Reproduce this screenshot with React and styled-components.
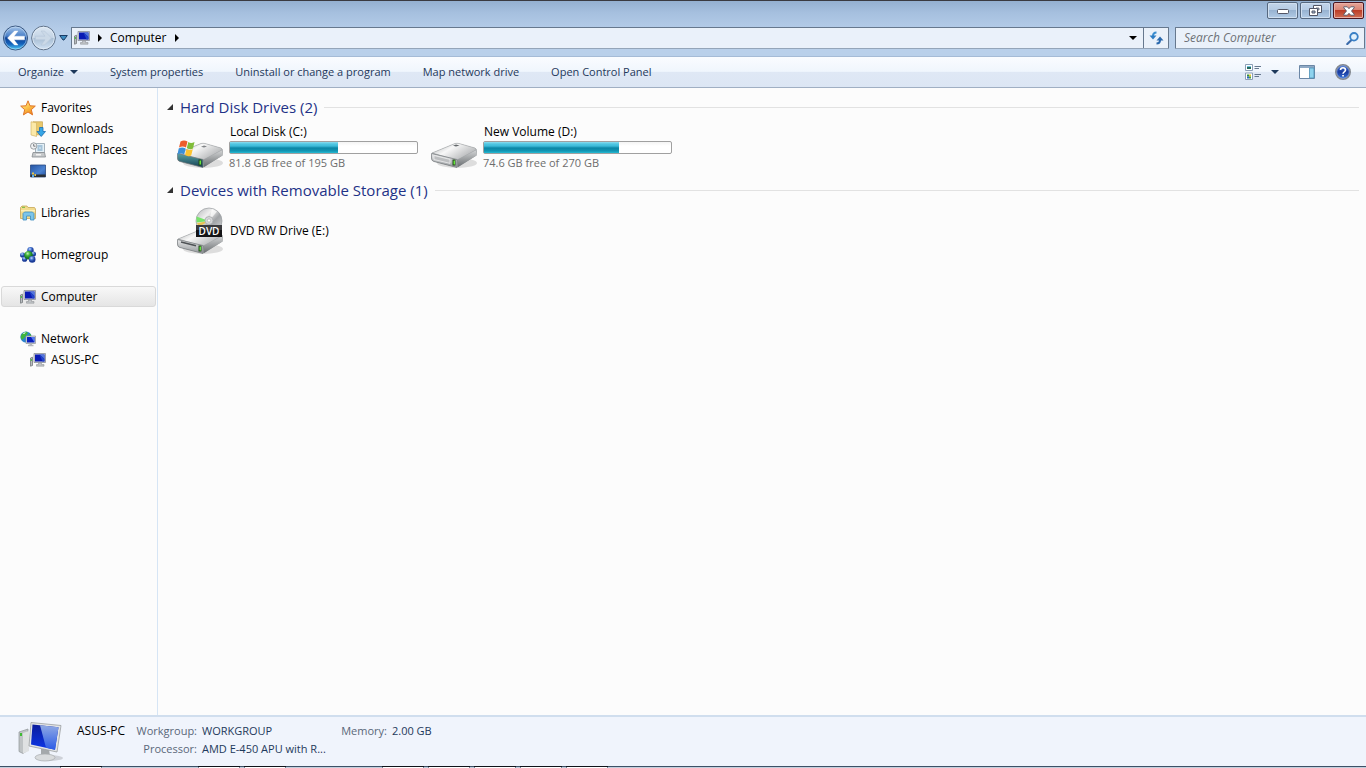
import { useState } from 'react';
import styled, { createGlobalStyle } from 'styled-components';

const GlobalStyle = createGlobalStyle`
  * {
    box-sizing: border-box;
  }

  body {
    margin: 0;
    background: #fcfcfc;
    color: #000;
    font-family: 'Open Sans', 'Noto Sans', sans-serif;
    font-size: 12px;
    line-height: 18px;
  }

  button,
  input {
    font: inherit;
    color: inherit;
  }

  button {
    background: none;
    border: 0;
    cursor: default;
    padding: 0;
  }

  svg {
    display: block;
    flex: none;
  }
`;

const Window = styled.div`
  display: flex;
  flex-direction: column;
  min-height: 100vh;
`;

const Frame = styled.header`
  background: linear-gradient(#94b0d0, #a6c0df 12px, #b9d0eb 34px, #b9d0ea);
  border-bottom: 1px solid #a5bbd6;
  border-top: 1px solid #3a3a40;
  padding: 1px 1px 6px 3px;
`;

const Caption = styled.div`
  display: flex;
  gap: 2px;
  height: 24px;
  justify-content: flex-end;
  padding-right: 1px;
`;

const CaptionButton = styled.button`
  align-items: center;
  background: ${({ $close }) =>
    $close
      ? 'linear-gradient(#e5a598, #d98373 48%, #bd3d27 50%, #cf6f55)'
      : 'linear-gradient(#c3d5ea, #b4cae3 48%, #98b3d1 50%, #b2cbe6)'};
  border: 1px solid ${({ $close }) => ($close ? '#4b1620' : '#56687f')};
  border-radius: 2px;
  box-shadow: inset 0 0 0 1px ${({ $close }) => ($close ? '#e9b0a6' : '#d0dff0')};
  display: flex;
  height: 17px;
  justify-content: center;
  width: 31px;
`;

const NavRow = styled.div`
  align-items: center;
  display: flex;
  height: 24px;
`;

const NavButtons = styled.div`
  align-items: center;
  display: flex;
  gap: 3px;
  margin-right: 3px;
`;

const AddressBar = styled.div`
  align-items: center;
  background: #eaf1fa;
  border: 1px solid #66788e;
  border-bottom-color: #94a5b9;
  border-radius: 1px;
  display: flex;
  flex: 1;
  height: 22px;
  margin-right: 6px;
  padding-left: 2px;
`;

const Crumb = styled.button`
  align-items: center;
  display: flex;
  gap: 8px;
`;

const AddressDrop = styled.button`
  display: flex;
  justify-content: center;
  margin-left: auto;
  width: 20px;
`;

const Refresh = styled.button`
  align-items: center;
  border-left: 1px solid #66788e;
  display: flex;
  height: 20px;
  justify-content: center;
  width: 25px;
`;

const SearchBox = styled.form`
  align-items: center;
  background: #eaf1fa;
  border: 1px solid #66788e;
  border-bottom-color: #94a5b9;
  border-radius: 1px;
  display: flex;
  height: 22px;
  padding: 0 5px 0 8px;
  width: 190px;
`;

const SearchInput = styled.input`
  background: none;
  border: 0;
  flex: 1;
  min-width: 0;
  outline: 0;
  padding: 0;

  &::placeholder {
    color: #6e7177;
    font-style: italic;
    opacity: 1;
  }
`;

const Toolbar = styled.nav`
  align-items: center;
  background: linear-gradient(#fafcff, #f0f6fd 48%, #dfe8f5 50%, #dce6f4);
  border-bottom: 1px solid #a0afc3;
  color: #1e395b;
  display: flex;
  font-size: 11px;
  gap: 32px;
  height: 31px;
  padding: 0 15px 0 18px;
`;

const ToolButton = styled.button`
  align-items: center;
  display: flex;
  gap: 6px;
`;

const ToolIcons = styled.div`
  align-items: center;
  display: flex;
  gap: 20px;
  margin-left: auto;
`;

const ViewButton = styled(ToolButton)`
  gap: 10px;
`;

const Body = styled.div`
  display: flex;
  flex: 1;
`;

const Sidebar = styled.aside`
  border-right: 1px solid #d6e5f5;
  flex: none;
  padding: 9px 1px;
  width: 158px;
`;

const TreeGroup = styled.ul`
  list-style: none;
  margin: 0 0 21px;
  padding: 0;
`;

const TreeLink = styled.a`
  align-items: center;
  background: ${({ $selected }) => ($selected ? 'linear-gradient(#f8f8f8, #e5e5e5)' : 'none')};
  border: 1px solid ${({ $selected }) => ($selected ? '#d9d9d9' : 'transparent')};
  border-radius: 3px;
  color: #000;
  display: flex;
  gap: 5px;
  height: 21px;
  padding-left: ${({ $child }) => ($child ? '28px' : '18px')};
  text-decoration: none;
`;

const Content = styled.main`
  flex: 1;
  min-width: 0;
  padding: 7px 7px 0 9px;
`;

const GroupHeading = styled.h2`
  align-items: center;
  color: #1f3287;
  display: flex;
  font-size: 15px;
  font-weight: 400;
  gap: 7px;
  line-height: 24px;
  margin: 0;

  &:after {
    background: #e2e2e2;
    content: '';
    flex: 1;
    height: 1px;
  }
`;

const DriveList = styled.ul`
  display: flex;
  flex-wrap: wrap;
  gap: 6px;
  list-style: none;
  margin: 5px 0 6px;
  padding: 0 0 0 9px;
`;

const Drive = styled.li`
  align-items: center;
  display: flex;
  gap: 5px;
  height: 48px;
  width: 248px;
`;

const DriveInfo = styled.div`
  flex: 1;
  line-height: 16px;

  & p {
    margin: 0;
  }
`;

const DriveName = styled.p`
  padding-left: 1px;
`;

const DriveFree = styled.p`
  color: #6d6d6d;
  font-size: 11px;
  padding-bottom: 2px;
`;

const Gauge = styled.div`
  background: linear-gradient(#f4f4f4, #fff 4px);
  border: 1px solid #a0a0a0;
  border-radius: 2px;
  height: 13px;
  margin: 1px 6px 1px 0;
`;

const GaugeFill = styled.div`
  background: linear-gradient(#8ddcef, #4fc6e2 2px, #3dbbd9 4px, #0a86a5 6px, #1296b4 9px, #26bcd5);
  height: 100%;
`;

const Details = styled.footer`
  align-items: center;
  background: #f0f4fc;
  border-top: 2px solid #d0deee;
  color: #1e395b;
  display: flex;
  height: 51px;
  padding-left: 18px;
`;

const DetailsGrid = styled.dl`
  display: grid;
  font-size: 11px;
  gap: 0 5px;
  grid-template-columns: 50px 65px 132px 48px auto;
  margin: 0 0 4px 14px;

  & dt {
    color: #5a6779;
    text-align: right;
  }

  & dd {
    margin: 0;
    white-space: nowrap;
  }
`;

const MachineName = styled.dt`
  && {
    color: #000;
    font-size: 12px;
    text-align: left;
  }
`;

const ProcessorLabel = styled.dt`
  grid-column: 2;
`;

const Taskbar = styled.div`
  background: #c3cfdd;
  border-top: 1px solid #3d5066;
  display: flex;
  gap: 96px;
  height: 2px;
  padding-left: 60px;
`;

const TaskGroup = styled.div`
  display: flex;
  gap: 4px;
`;

const TaskTab = styled.span`
  background: #fff;
  border: solid #75859a;
  border-width: 0 1px;
  box-shadow: 0 -1px #10131a;
  width: 42px;
`;

const Arrow = ({ dir = 'down', color = '#1e395b' }) => (
  <svg width={dir === 'down' ? 8 : 4} height={dir === 'down' ? 4 : 8} fill={color}>
    <path d={dir === 'down' ? 'M0 0h8L4 4z' : 'M0 0l4 4-4 4z'} />
  </svg>
);

const BackIcon = () => (
  <svg width="25" height="26" viewBox="0 0 25 26">
    <defs>
      <linearGradient id="back" x2="0" y2="1">
        <stop offset="0" stopColor="#a9c7ea" />
        <stop offset=".42" stopColor="#4a80c8" />
        <stop offset=".5" stopColor="#0d4296" />
        <stop offset=".75" stopColor="#1563bc" />
        <stop offset="1" stopColor="#4fd2fb" />
      </linearGradient>
    </defs>
    <circle cx="12.5" cy="13" r="12" fill="url(#back)" stroke="#3a5780" />
    <circle cx="12.5" cy="13" r="11" fill="none" stroke="#cfe5fa" strokeOpacity=".5" />
    <path d="M4.500 13l7-7H15l-4 5.200h10.500v3.600H11l4 5.200h-3.500z" fill="#fff" stroke="#fff" strokeWidth=".4" />
  </svg>
);

const ForwardIcon = () => (
  <svg width="25" height="26" viewBox="0 0 25 26">
    <defs>
      <linearGradient id="fwd" x2="0" y2="1">
        <stop offset="0" stopColor="#dde8f3" />
        <stop offset=".48" stopColor="#c4d4e5" />
        <stop offset=".52" stopColor="#a9bfd5" />
        <stop offset="1" stopColor="#d2e3f4" />
      </linearGradient>
    </defs>
    <circle cx="12.5" cy="13" r="11.8" fill="url(#fwd)" stroke="#5c6e85" />
    <circle cx="12.5" cy="13" r="10.8" fill="none" stroke="#e8f1fa" strokeOpacity=".7" />
    <path d="M20.500 13l-7-7H10l4 5.200H4.500v3.600H14L10 20h3.500z" fill="#cbd9e7" stroke="#b5c6d8" strokeWidth=".6" />
  </svg>
);

const PcIcon = () => (
  <svg width="16" height="16" viewBox="0 0 16 16">
    <path d="M.5 6l2-.8v8.300l-2 .7z" fill="#b9bdc0" stroke="#73787c" strokeWidth=".8" />
    <path d="M.8 7h1v2h-1z" fill="#36bd2e" />
    <path d="M4 1.500h11.500v9H4z" fill="#d2d4da" stroke="#8d9199" strokeWidth=".8" />
    <path d="M5 2.500h9.500v7H5z" fill="#0a1ab4" />
    <path d="M9.500 2.500h5v4.500z" fill="#5477dc" />
    <path d="M9.500 2.500l5 4.500v2.500h-2z" fill="#2446c8" />
    <path d="M8.500 10.800h3v1.700h2.500v1.700H6.500v-1.700h2z" fill="#c1c4c8" stroke="#84888c" strokeWidth=".5" />
  </svg>
);

const StarIcon = () => (
  <svg width="16" height="16" viewBox="0 0 16 16">
    <defs>
      <linearGradient id="star" x2=".6" y2="1">
        <stop offset="0" stopColor="#fff3a0" />
        <stop offset=".5" stopColor="#fdc850" />
        <stop offset="1" stopColor="#f08a1c" />
      </linearGradient>
    </defs>
    <path d="M8 .8l2 5 5.300.3-4 3.600 1.300 5.200L8 12l-4.600 2.900 1.300-5.200-4-3.600L6 5.800z" fill="url(#star)" stroke="#e0762a" strokeLinejoin="round" />
  </svg>
);

const DownloadsIcon = () => (
  <svg width="16" height="16" viewBox="0 0 16 16">
    <path d="M3 .8h9.500v13H3z" fill="#e9c96c" stroke="#c9a95a" strokeWidth=".8" />
    <path d="M1 .8l5.500 1V15.500L1 14z" fill="#fbe9a8" stroke="#cfae5c" strokeWidth=".6" />
    <path d="M9.500 6.500h3.500v4h2.500l-4.300 5-4.200-5h2.500z" fill="#37a6e6" stroke="#1b6fb5" strokeWidth=".8" />
  </svg>
);

const RecentIcon = () => (
  <svg width="16" height="16" viewBox="0 0 16 16">
    <path d="M5.500 1.500h9v9h-9z" fill="#e4f0f7" stroke="#8fa0ab" strokeWidth=".8" />
    <path d="M7.500 4h5M7.500 6h2m1 0h2M7.500 8h5" stroke="#6697bb" />
    <path d="M3 10.500h11.500l1 4.500H2z" fill="#c5c8ca" stroke="#868b8f" strokeWidth=".8" />
    <path d="M6 12h5v1.500H6z" fill="#f3f3f3" />
    <circle cx="3.7" cy="4" r="3.2" fill="#f0f1f2" stroke="#92979b" strokeWidth=".9" />
    <path d="M3.700 2v2.200h1.800" stroke="#555b60" strokeWidth=".8" fill="none" />
  </svg>
);

const DesktopIcon = () => (
  <svg width="16" height="16" viewBox="0 0 16 16">
    <defs>
      <linearGradient id="desk" x2="1" y2="1">
        <stop offset="0" stopColor="#2554a3" />
        <stop offset=".6" stopColor="#4b83d2" />
        <stop offset="1" stopColor="#234f9a" />
      </linearGradient>
    </defs>
    <path d="M.5 2h15v12H.5z" fill="url(#desk)" stroke="#294a82" strokeWidth=".8" />
    <path d="M.5 11.500h15V14H.5z" fill="#2b3036" />
    <path d="M2 9.500h2v2H2zM4.500 11h1.500v2H4.500z" fill="#e5c44c" />
    <path d="M2 12h2v2H2z" fill="#5bb0ee" />
  </svg>
);

const LibrariesIcon = () => (
  <svg width="16" height="16" viewBox="0 0 16 16">
    <path d="M.5 2.500L2 1h5l1 1.500h6.500l1 1.500v9.500H.5z" fill="#f2db8c" stroke="#c6a757" strokeWidth=".8" />
    <path d="M1 5h14v1.500H1z" fill="#fdf0b8" />
    <path d="M2 1.800h3v1H2z" fill="#6cb93f" />
    <path d="M3 15V8.500L4.500 7h8L14 8.500V15h-3.500v-4h-4v4z" fill="#7cc5ea" stroke="#3d8dbf" strokeWidth=".8" />
  </svg>
);

const HomegroupIcon = () => (
  <svg width="16" height="16" viewBox="0 0 16 16">
    <defs>
      <radialGradient id="ball" cx=".4" cy=".3">
        <stop offset="0" stopColor="#c9defb" />
        <stop offset=".5" stopColor="#4a78d2" />
        <stop offset="1" stopColor="#1b3c98" />
      </radialGradient>
      <radialGradient id="ballGreen" cx=".4" cy=".3">
        <stop offset="0" stopColor="#c4f2b4" />
        <stop offset=".5" stopColor="#41b23c" />
        <stop offset="1" stopColor="#1a7a24" />
      </radialGradient>
    </defs>
    <circle cx="10.5" cy="3.3" r="3.2" fill="url(#ball)" />
    <circle cx="2.6" cy="8" r="2.6" fill="url(#ball)" />
    <circle cx="13.4" cy="7" r="2.6" fill="url(#ball)" />
    <circle cx="4.6" cy="12.2" r="2.6" fill="url(#ball)" />
    <circle cx="8.5" cy="8.3" r="4.3" fill="url(#ballGreen)" />
    <circle cx="12.2" cy="12.4" r="3.3" fill="url(#ball)" />
  </svg>
);

const NetworkIcon = () => (
  <svg width="16" height="16" viewBox="0 0 16 16">
    <circle cx="6" cy="6" r="5.6" fill="#2c83cd" />
    <path d="M2 3q4-4 6-1L6 5 4 7 2 9Q-.5 6 2 3zM8 4l3-1v4z" fill="#3fb53c" />
    <path d="M2.500 3Q4 1 6 1L4.500 3z" fill="#cdf0d0" />
    <path d="M6 5h9.500v7.500H6z" fill="#d6d9dd" stroke="#8d9298" strokeWidth=".7" />
    <path d="M7 6h7.500v5.500H7z" fill="#0a1fbe" />
    <path d="M11 6h3.500v5.500z" fill="#527aee" />
    <path d="M9.500 12.500h2.500v1.300h1.500v1.400H8v-1.400h1.500z" fill="#b4b8bc" />
  </svg>
);

const RefreshIcon = () => (
  <svg width="15" height="14" viewBox="0 0 15 14">
    <path d="M7.500 1.500Q4 1.500 4 5" fill="none" stroke="#3b8ed0" strokeWidth="2" />
    <path d="M.5 4.500h7L4 8.500z" fill="#2d7cc4" />
    <path d="M7.500 12.500q3.500 0 3.500-3.500" fill="none" stroke="#2b69ad" strokeWidth="2" />
    <path d="M7.500 9.500h7L11 5.500z" fill="#2b69ad" />
  </svg>
);

const SearchIcon = () => (
  <svg width="13" height="13" viewBox="0 0 13 13">
    <path d="M6 7.500L1.300 12" stroke="#3b6cab" strokeWidth="2.200" strokeLinecap="round" />
    <circle cx="8" cy="4.800" r="3.800" fill="#e2f1fc" stroke="#3a80c6" strokeWidth="1.800" />
  </svg>
);

const ViewIcon = () => (
  <svg width="16" height="16" viewBox="0 0 16 16">
    <path d="M.5.500h7v6h-7zM.5 9h7v6.500h-7z" fill="#fff" stroke="#8b9fb6" />
    <path d="M2 2h4v1H2z" fill="#6fc2e0" />
    <path d="M2 3h4v2H2z" fill="#266a5b" />
    <path d="M2 10.500h2v2H2z" fill="#2e8f3e" />
    <path d="M4 10.500h2v2H4z" fill="#e1c32a" />
    <path d="M2 12.500h2v2H2z" fill="#3264c0" />
    <path d="M4 12.500h2v2H4z" fill="#4aa143" />
    <path d="M9.500 2.500H16M9.500 4.500H14M9.500 10.500H16M9.500 12.500H14" stroke="#66788e" />
  </svg>
);

const PaneIcon = () => (
  <svg width="16" height="14" viewBox="0 0 16 14">
    <path d="M.5.500h15v13H.5z" fill="#fff" stroke="#6b87a6" />
    <path d="M1 1h14v2H1z" fill="#8fa9c5" />
    <path d="M10.500 3h4.500v10h-4.500z" fill="#8ed3ee" stroke="#4c8fb5" strokeWidth=".8" />
  </svg>
);

const HelpIcon = () => (
  <svg width="16" height="16" viewBox="0 0 16 16">
    <defs>
      <linearGradient id="help" x2="0" y2="1">
        <stop offset="0" stopColor="#4a78d4" />
        <stop offset=".5" stopColor="#173a9f" />
        <stop offset="1" stopColor="#3a78dc" />
      </linearGradient>
    </defs>
    <circle cx="8" cy="8" r="7.2" fill="url(#help)" stroke="#83888f" strokeWidth="1.6" />
    <circle cx="8" cy="8" r="6.2" fill="none" stroke="#a9c1ec" strokeWidth=".5" />
    <path d="M5.500 6Q5.500 3.700 8 3.700T10.500 6Q10.500 7 9.300 7.800T8 9.700" fill="none" stroke="#fff" strokeWidth="1.600" />
    <path d="M7.200 11h1.700v1.600H7.200z" fill="#fff" />
  </svg>
);

const DriveBody = ({ teal }) => (
  <>
    <ellipse cx="27" cy="39" rx="20" ry="5" fill="#000" opacity=".12" />
    <path d="M2 29L25 19.500Q27 19 29 19.500L45 24Q47 25 47 27L46.500 31.500 29 42.500Q27 43.500 25 43L4 37.500Q2 37 1.500 35z" fill="#93979a" />
    <path d="M2 29L25 19.500Q27 19 29 19.500L45 24Q47 25 45 26.500L29 35Q27 36 25 35.500z" fill="url(#driveTop)" stroke="#a6a9ab" strokeWidth=".6" />
    <path d="M1.500 29.500L27 35.500V43.500L4 37.500Q1.500 37 1.500 34z" fill={teal ? 'url(#driveTeal)' : 'url(#driveFront)'} stroke="#777b7e" strokeWidth=".7" />
    <path d="M28 35.500L46.500 26V31.500L28 43z" fill="url(#driveSide)" />
    <path d="M22.500 35.500h3v6h-3z" fill="#22451d" />
    <path d="M23.500 36.500h1.500v4h-1.500z" fill="#66e63c" />
  </>
);

const DriveDefs = () => (
  <defs>
    <linearGradient id="driveTop" x2="1" y2=".6">
      <stop offset="0" stopColor="#a9acae" />
      <stop offset=".45" stopColor="#f8f8f8" />
      <stop offset="1" stopColor="#b0b2b4" />
    </linearGradient>
    <linearGradient id="driveFront" x2="0" y2="1">
      <stop offset="0" stopColor="#e8e9ea" />
      <stop offset="1" stopColor="#94989b" />
    </linearGradient>
    <linearGradient id="driveTeal" x2="0" y2="1">
      <stop offset="0" stopColor="#5aa4a5" />
      <stop offset="1" stopColor="#143f52" />
    </linearGradient>
    <linearGradient id="driveSide" x2="0" y2="1">
      <stop offset="0" stopColor="#d3d5d6" />
      <stop offset="1" stopColor="#6a6e71" />
    </linearGradient>
  </defs>
);

const SystemDriveIcon = () => (
  <svg width="48" height="48" viewBox="0 0 48 48">
    <DriveDefs />
    <DriveBody teal />
    <path d="M28 21.500l3 .9-3 1.200-3-.9z" fill="#808386" />
    <path d="M4.500 17.500Q8 15.500 11.500 17.500L10 23.500Q6.500 21.500 3 23.500z" fill="#ed5c2b" />
    <path d="M12.300 18Q15 20 18.500 18L17 24.500Q13.500 26 10.800 24z" fill="#81bd3a" />
    <path d="M2.700 24.500Q6 22.500 9.700 24.500L8.200 30.500Q5 28.500 1.500 30.500z" fill="#3a8fd8" />
    <path d="M10.500 25Q13.500 27 16.800 25.300L15.200 31.500Q12 33 9 31z" fill="#fbc432" />
  </svg>
);

const HardDriveIcon = () => (
  <svg width="48" height="48" viewBox="0 0 48 48">
    <DriveBody />
    <path d="M26 20.500l3.500.9-3.500 1.200-3-.9z" fill="#64686b" />
    <path d="M4 31.500l16 3.900v4L4 35.500z" fill="#bcbec0" stroke="#f4f4f4" strokeWidth=".7" />
  </svg>
);

const DvdText = styled.text`
  fill: #fff;
  font-family: 'Open Sans', sans-serif;
  font-size: 10px;
  font-weight: 600;
`;

const DvdIcon = () => (
  <svg width="48" height="48" viewBox="0 0 48 48">
    <defs>
      <linearGradient id="disc" x2="1" y2="1">
        <stop offset="0" stopColor="#b0b3b6" />
        <stop offset=".35" stopColor="#efefef" />
        <stop offset=".6" stopColor="#a0a3a6" />
        <stop offset="1" stopColor="#dedfe0" />
      </linearGradient>
    </defs>
    <g transform="translate(0 3)">
      <DriveBody />
      <path d="M5 32l15 3.700" stroke="#4d5154" strokeWidth="1.500" />
    </g>
    <circle cx="33" cy="14" r="13" fill="url(#disc)" stroke="#9a9da0" strokeWidth=".7" />
    <path d="M33 14L20.500 9.500v6z" fill="#78e36b" />
    <path d="M33 14L21 16l1.500 4z" fill="#e8c255" />
    <path d="M33 14l3-12 5 2.500z" fill="#fff" opacity=".7" />
    <circle cx="33" cy="13.5" r="4" fill="#d5d7d9" stroke="#a2a5a8" strokeWidth=".7" />
    <circle cx="33" cy="13.5" r="1.6" fill="#fff" stroke="#999" strokeWidth=".5" />
    <path d="M20 18h26v12H20z" fill="#141416" />
    <path d="M20 18h26v5H20z" fill="#3a3b3e" />
    <DvdText x="33" y="27.500" textAnchor="middle">DVD</DvdText>
  </svg>
);

const BigPcIcon = () => (
  <svg width="45" height="42" viewBox="0 0 45 42">
    <defs>
      <linearGradient id="screen" x2="0" y2="1">
        <stop offset="0" stopColor="#0a1c9c" />
        <stop offset="1" stopColor="#0c36e8" />
      </linearGradient>
      <linearGradient id="glare" x2="0" y2="1">
        <stop offset="0" stopColor="#8fa9e4" />
        <stop offset="1" stopColor="#2b5be6" />
      </linearGradient>
    </defs>
    <ellipse cx="31" cy="37" rx="14" ry="3" fill="#000" opacity=".14" />
    <path d="M1 11l9-3v21l-5 3.500-4-2z" fill="#bfc3c5" stroke="#909598" strokeWidth=".7" />
    <path d="M5 12l6-2v20l-6 2.500z" fill="#dfe1e2" />
    <path d="M2 12h2v3H2z" fill="#3fbb32" />
    <path d="M23 28h8l1 7h-9z" fill="#a4a8ab" />
    <ellipse cx="27" cy="36.500" rx="10" ry="3.500" fill="#d9dbdd" stroke="#a7abae" strokeWidth=".7" />
    <path d="M13 1.500l30 3-4 26.500-28-6z" fill="#e3e5e6" stroke="#9a9ea1" strokeWidth=".8" />
    <path d="M14.500 3.500l26 2.700-3.500 22.500-24-5.200z" fill="url(#screen)" />
    <path d="M22 4.300l18.500 1.900-3.500 22.500-9-2z" fill="url(#glare)" />
  </svg>
);

const places = [
  [{ label: 'Favorites', icon: StarIcon }, { label: 'Downloads', icon: DownloadsIcon, child: true }, { label: 'Recent Places', icon: RecentIcon, child: true }, { label: 'Desktop', icon: DesktopIcon, child: true }],
  [{ label: 'Libraries', icon: LibrariesIcon }],
  [{ label: 'Homegroup', icon: HomegroupIcon }],
  [{ label: 'Computer', icon: PcIcon }],
  [{ label: 'Network', icon: NetworkIcon }, { label: 'ASUS-PC', icon: PcIcon, child: true }],
];

const groups = [
  {
    title: 'Hard Disk Drives (2)',
    drives: [
      { name: 'Local Disk (C:)', free: '81.8 GB free of 195 GB', used: 58, icon: SystemDriveIcon },
      { name: 'New Volume (D:)', free: '74.6 GB free of 270 GB', used: 72, icon: HardDriveIcon },
    ],
  },
  {
    title: 'Devices with Removable Storage (1)',
    drives: [{ name: 'DVD RW Drive (E:)', icon: DvdIcon }],
  },
];

// number of open windows in each taskbar group
const tasks = [1, 2, 5];

const App = () => {
  const [selected, setSelected] = useState('Computer');
  const [search, setSearch] = useState('');

  return (
    <Window>
      <GlobalStyle />
      <Frame>
        <Caption>
          <CaptionButton aria-label="Minimize">
            <svg width="12" height="6" viewBox="0 0 12 6">
              <rect x=".5" y="1.500" width="11" height="4" rx="1" fill="#fff" stroke="#535666" />
            </svg>
          </CaptionButton>
          <CaptionButton aria-label="Restore">
            <svg width="13" height="11" viewBox="0 0 13 11">
              <path d="M4.500.500h8v7h-8z" fill="#fff" stroke="#535666" />
              <path d="M7 3h3v2H7z" fill="#a9c0dc" stroke="#535666" strokeWidth=".8" />
              <path d="M.5 3.500h8v7h-8z" fill="#fff" stroke="#535666" />
              <path d="M3 6h3v2H3z" fill="#a9c0dc" stroke="#535666" />
            </svg>
          </CaptionButton>
          <CaptionButton aria-label="Close" $close>
            <svg width="12" height="10" viewBox="0 0 12 10">
              <path d="M.8.800h3.500L6 2.700 7.700.800h3.500v1L8.500 5l2.700 3.200v1H7.700L6 7.300 4.300 9.200H.8v-1L3.500 5 .8 1.800z" fill="#fff" stroke="#535666" strokeWidth=".9" />
            </svg>
          </CaptionButton>
        </Caption>
        <NavRow>
          <NavButtons>
            <button aria-label="Back">
              <BackIcon />
            </button>
            <button aria-label="Forward">
              <ForwardIcon />
            </button>
            <button aria-label="Recent pages">
              <svg width="9" height="6" viewBox="0 0 9 6">
                <path d="M.7.500h7.600L5 5H4z" fill="#3e8cc0" stroke="#1b3c66" />
              </svg>
            </button>
          </NavButtons>
          <AddressBar>
            <Crumb>
              <PcIcon />
              <Arrow dir="right" color="#000" />
              Computer
              <Arrow dir="right" color="#000" />
            </Crumb>
            <AddressDrop aria-label="Previous locations">
              <Arrow color="#000" />
            </AddressDrop>
            <Refresh aria-label="Refresh">
              <RefreshIcon />
            </Refresh>
          </AddressBar>
          <SearchBox role="search" onSubmit={(e) => e.preventDefault()}>
            <SearchInput aria-label="Search Computer" placeholder="Search Computer" value={search} onChange={(e) => setSearch(e.target.value)} />
            <button aria-label="Search">
              <SearchIcon />
            </button>
          </SearchBox>
        </NavRow>
      </Frame>

      <Toolbar>
        <ToolButton>
          Organize <Arrow />
        </ToolButton>
        <ToolButton>System properties</ToolButton>
        <ToolButton>Uninstall or change a program</ToolButton>
        <ToolButton>Map network drive</ToolButton>
        <ToolButton>Open Control Panel</ToolButton>
        <ToolIcons>
          <ViewButton aria-label="Change your view">
            <ViewIcon />
            <Arrow />
          </ViewButton>
          <ToolButton aria-label="Show the preview pane">
            <PaneIcon />
          </ToolButton>
          <ToolButton aria-label="Help">
            <HelpIcon />
          </ToolButton>
        </ToolIcons>
      </Toolbar>

      <Body>
        <Sidebar>
          {places.map((group) => (
            <TreeGroup key={group[0].label}>
              {group.map(({ label, icon: Icon, child }) => (
                <li key={label}>
                  <TreeLink href="#" $child={child} $selected={selected === label} onClick={() => setSelected(label)}>
                    <Icon />
                    {label}
                  </TreeLink>
                </li>
              ))}
            </TreeGroup>
          ))}
        </Sidebar>
        <Content>
          {groups.map(({ title, drives }) => (
            <section key={title}>
              <GroupHeading>
                <svg width="6" height="6" viewBox="0 0 6 6">
                  <path d="M6 0v6H0z" fill="#333" />
                </svg>
                {title}
              </GroupHeading>
              <DriveList>
                {drives.map(({ name, free, used, icon: Icon }) => (
                  <Drive key={name}>
                    <Icon />
                    <DriveInfo>
                      <DriveName>{name}</DriveName>
                      {free && (
                        <>
                          <Gauge>
                            <GaugeFill style={{ width: `${used}%` }} />
                          </Gauge>
                          <DriveFree>{free}</DriveFree>
                        </>
                      )}
                    </DriveInfo>
                  </Drive>
                ))}
              </DriveList>
            </section>
          ))}
        </Content>
      </Body>

      <Details>
        <BigPcIcon />
        <DetailsGrid>
          <MachineName>ASUS-PC</MachineName>
          <dt>Workgroup:</dt>
          <dd>WORKGROUP</dd>
          <dt>Memory:</dt>
          <dd>2.00 GB</dd>
          <ProcessorLabel>Processor:</ProcessorLabel>
          <dd>AMD E-450 APU with R...</dd>
        </DetailsGrid>
      </Details>
      <Taskbar>
        {tasks.map((count) => (
          <TaskGroup key={count}>
            {Array.from({ length: count }, (_, i) => (
              <TaskTab key={i} />
            ))}
          </TaskGroup>
        ))}
      </Taskbar>
    </Window>
  );
};

export default App;
